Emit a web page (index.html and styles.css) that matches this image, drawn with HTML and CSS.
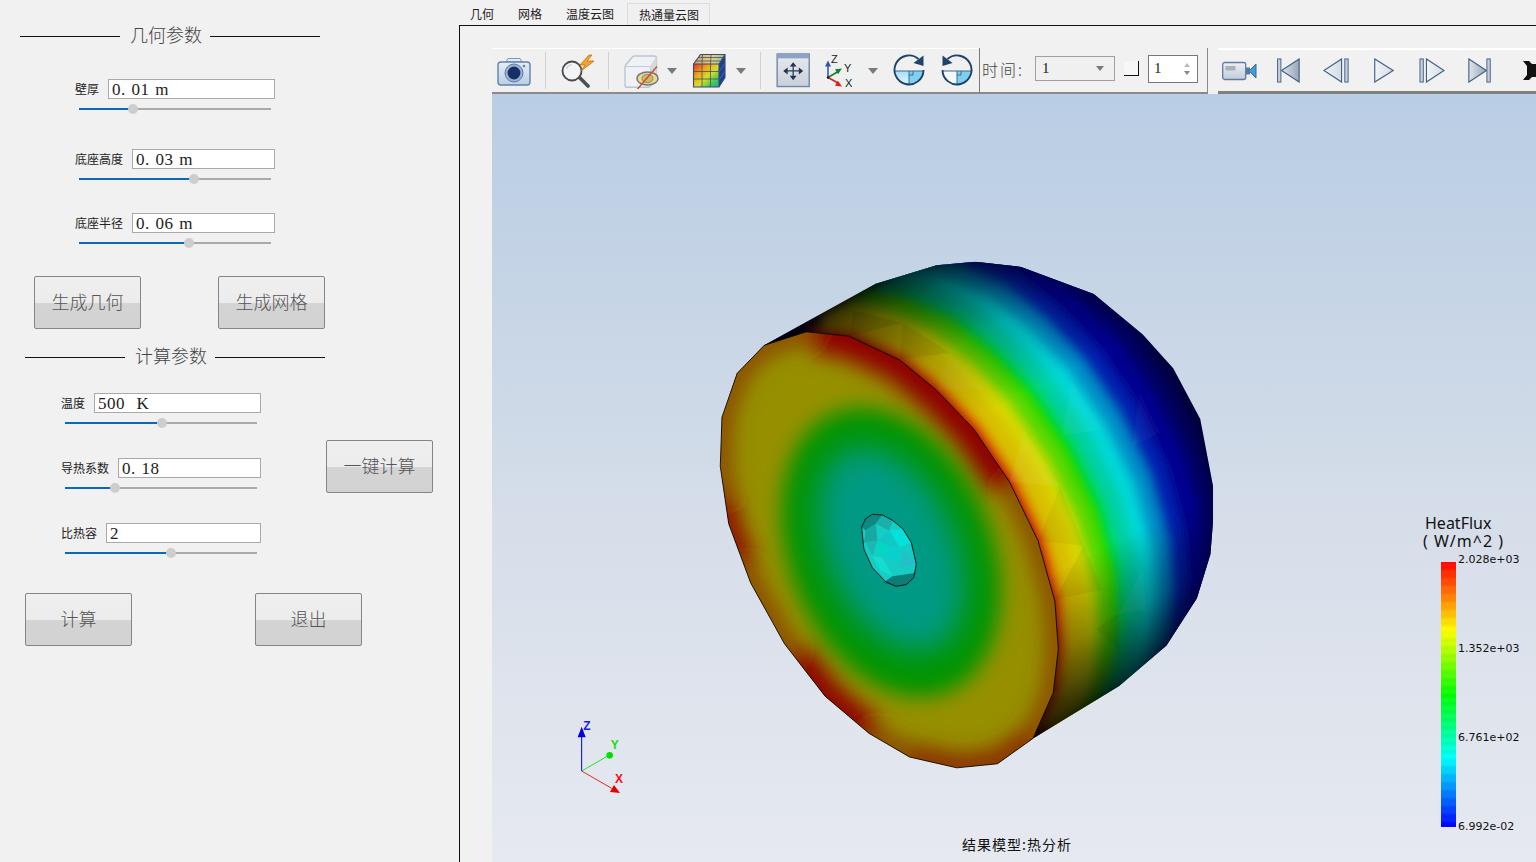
FILE: index.html
```html
<!DOCTYPE html>
<html lang="zh">
<head>
<meta charset="utf-8">
<title>热分析</title>
<link rel="stylesheet" href="styles.css">
</head>
<body>
<div class="app">
  <aside class="side">
    <div class="title"><span class="rule r100"></span><span class="title-text">几何参数</span><span class="rule r110"></span></div>
    <div class="fields geo">
      <div class="block"><div class="row"><label>壁厚</label><input value="0. 01 m"></div><div class="slider"><span class="fill" style="width:54px"></span><span class="thumb"></span><span class="rest"></span></div></div>
      <div class="block b35"><div class="row"><label>底座高度</label><input value="0. 03 m"></div><div class="slider"><span class="fill" style="width:115px"></span><span class="thumb"></span><span class="rest"></span></div></div>
      <div class="block b29"><div class="row"><label>底座半径</label><input value="0. 06 m"></div><div class="slider"><span class="fill" style="width:110px"></span><span class="thumb"></span><span class="rest"></span></div></div>
    </div>
    <div class="btns btns-geo"><button>生成几何</button><button>生成网格</button></div>
    <div class="title title2"><span class="rule r100"></span><span class="title-text">计算参数</span><span class="rule r110"></span></div>
    <div class="calc">
      <div class="fields calc-fields">
        <div class="block"><div class="row"><label>温度</label><input value="500  K"></div><div class="slider"><span class="fill" style="width:97px"></span><span class="thumb"></span><span class="rest"></span></div></div>
        <div class="block b30"><div class="row"><label>导热系数</label><input value="0. 18"></div><div class="slider"><span class="fill" style="width:50px"></span><span class="thumb"></span><span class="rest"></span></div></div>
        <div class="block b30"><div class="row"><label>比热容</label><input value="2"></div><div class="slider"><span class="fill" style="width:106px"></span><span class="thumb"></span><span class="rest"></span></div></div>
      </div>
      <button class="onekey">一键计算</button>
    </div>
    <div class="btns btns-calc"><button>计算</button><button>退出</button></div>
  </aside>

  <main class="main">
    <nav class="tabs"><span class="tab first">几何</span><span class="tab">网格</span><span class="tab">温度云图</span><span class="tab active">热通量云图</span></nav>
    <section class="pane">
      <div class="tools">
        <div class="toolbar">
          <svg class="i34" viewBox="0 0 34 30"><defs><linearGradient id="camBody" x1="0" y1="0" x2="0" y2="1"><stop offset="0" stop-color="#e6edf6"/><stop offset="1" stop-color="#bccfe6"/></linearGradient></defs><path d="M9 6l2-3.500h12l2 3.500z" fill="#e3eaf3" stroke="#7a97b8"/><rect x="1" y="6" width="32" height="23" rx="3" fill="url(#camBody)" stroke="#5f83ab" stroke-width="1.400"/><circle cx="17" cy="17" r="9" fill="#9ab2d0" stroke="#5a7da8"/><circle cx="17" cy="17" r="6.400" fill="#172f66"/><circle cx="27" cy="10" r="1.300" fill="#5f83ab"/></svg>
          <span class="sep"></span>
          <svg class="i35w" viewBox="0 0 35 34"><circle cx="12" cy="17" r="9.500" fill="#f2f4f6" stroke="#4a4a4a" stroke-width="1.800"/><path d="M6.500 15a6 6 0 0 1 5-4.500" stroke="#c4c4c4" fill="none"/><path d="M20 24l8 8" stroke="#4a4f52" stroke-width="3.600" stroke-linecap="round"/><path d="M29 1l-9 10h5l-4 6 13-10h-7l5-6z" fill="#f0a428" stroke="#c8700c" stroke-width=".8"/></svg>
          <span class="sep"></span>
          <div class="drop"><svg class="i36" viewBox="0 0 36 36"><path d="M2 14c0-1 .5-1.800 1-2.500L9 4.500C9.500 3.800 10 3 11.500 3H31c1.500 0 2.500 1 2.500 2.500V25l-6 8c-.5.7-1 1.200-2 1.200H4c-1 0-2-1-2-2z" fill="#eff1f4" stroke="#bcc5d2" stroke-width="1.400"/><path d="M2.500 13.500H26c1 0 1.500.5 1.500 1.500v19M27.500 14l6-9" fill="none" stroke="#c3cbd6" stroke-width="1.200"/><path d="M27.500 14l6-9v20l-6 8z" fill="#d6dae1"/><ellipse cx="24.500" cy="25.500" rx="10.500" ry="6.500" fill="#ecd98c" stroke="#6e7683" stroke-width="1.400"/><ellipse cx="24.500" cy="25.500" rx="5.500" ry="4.200" fill="#cdb96c" stroke="#8b8b70"/><path d="M34 13.500L14.500 36" stroke="#cf4f28" stroke-width="1.500"/></svg><span class="tri"></span></div>
          <div class="drop d10"><svg class="i35" viewBox="-1.500 0 35 35"><defs><linearGradient id="gridTop" x1="0" y1="0" x2="1" y2="0"><stop offset="0" stop-color="#d8a070"/><stop offset=".6" stop-color="#e6d080"/><stop offset="1" stop-color="#88c0a0"/></linearGradient><linearGradient id="gridFace" x1="0" y1="0" x2="1" y2="1"><stop offset="0" stop-color="#e62b1e"/><stop offset=".3" stop-color="#f0a018"/><stop offset=".55" stop-color="#d8dc28"/><stop offset=".8" stop-color="#40c858"/><stop offset="1" stop-color="#1fa8c8"/></linearGradient></defs><path d="M8 1.500h24.500l-6 9.500H1z" fill="url(#gridTop)"/><rect x="1" y="11" width="25.500" height="23" fill="url(#gridFace)"/><path d="M26.500 11l6-9.500v23l-6 9.500z" fill="#1c3e94"/><path d="M26.500 19l6-9M26.500 27l6-9" stroke="#5878c0" stroke-width=".7"/><path d="M9.500 11v23M18 11v23M1 18.500h25.500M1 26h25.500M10 1.500L9.500 11M18.500 1.500L18 11M3 8h25M5.500 4.500h25" stroke="#3f5266" stroke-width=".8"/><path d="M1 11h25.500v23H1zM1 11l7-9.500h24.500v23l-6 9.500M26.500 11l6-9.500" fill="none" stroke="#3c4c68" stroke-width="1.100"/></svg><span class="tri"></span></div>
          <span class="sep"></span>
          <svg class="i35" viewBox="-1 0 35 36"><defs><linearGradient id="fitBg" x1="0" y1="0" x2="0" y2="1"><stop offset="0" stop-color="#e8ebf0"/><stop offset="1" stop-color="#c9ced8"/></linearGradient></defs><rect x=".7" y="1" width="33" height="33.500" fill="url(#fitBg)" stroke="#6b86aa" stroke-width="1.400"/><rect x="1" y="1" width="32.500" height="4.500" fill="#8ca3c3"/><path d="M17.200 12v13M10 18.500h14.500" stroke="#2c3e58" stroke-width="1.300"/><path d="M17.200 9.500l-3.500 4.500h7zM17.200 28l-3.500-4.500h7zM7 18.500l4.500-3.500v7zM27.500 18.500l-4.500-3.500v7z" fill="#1f3350"/></svg>
          <div class="drop d12"><svg class="i32" viewBox="-4 0 32 36"><path d="M0 24.500V10" stroke="#2a55b0" stroke-width="1.500"/><path d="M0 7.500l-3 6h6z" fill="#2a55b0"/><path d="M0 24.500L11 18" stroke="#188038" stroke-width="1.700"/><path d="M14 15.500l-7 .8 3 5z" fill="#188038"/><path d="M0 24.500l11 6" stroke="#d82020" stroke-width="1.700"/><path d="M14 33.500l-7-.8 2.800-5z" fill="#d82020"/><circle cx="0" cy="24.500" r="1.200" fill="#111"/><text x="3" y="10" class="axlet">Z</text><text x="16" y="19" class="axlet">Y</text><text x="17" y="34" class="axlet">X</text></svg><span class="tri"></span></div>
          <svg class="i34r" viewBox="-2 0 34 34"><defs><linearGradient id="rotFill" x1="0" y1="0" x2="0" y2="1"><stop offset="0" stop-color="#a8def4"/><stop offset="1" stop-color="#e6f6fc"/></linearGradient></defs><path d="M1 17h14v14A14 14 0 0 1 1 17z" fill="url(#rotFill)"/><path d="M15 17h14A14 14 0 0 1 15 31z" fill="#7fd0ee"/><path d="M1 17h28M15 17v14M15 21h4v-4" fill="none" stroke="#3c6a92"/><path d="M24.500 5A14.500 14.500 0 1 0 29.500 16" fill="none" stroke="#1d4468" stroke-width="1.900"/><path d="M29.500 1.500v10.500l-10-3z" fill="#1d4468"/></svg>
          <svg class="i34r" viewBox="-2 0 34 34"><path d="M1 17h14v14A14 14 0 0 1 1 17z" fill="#f4f8fb"/><path d="M15 17h14A14 14 0 0 1 15 31z" fill="#7fd0ee"/><path d="M1 17h28M15 17v14M15 21h4v-4" fill="none" stroke="#3c6a92"/><path d="M5.500 5A14.500 14.500 0 1 1 .5 16" fill="none" stroke="#1d4468" stroke-width="1.900"/><path d="M.5 1.500v10.500l10-3z" fill="#1d4468"/></svg>
        </div>
        <div class="timebar">
          <span class="time-label">时间:</span>
          <div class="combo"><span>1</span><span class="tri small"></span></div>
          <span class="check"></span>
          <div class="spin"><span>1</span><span class="arrows"><i class="up"></i><i class="down"></i></span></div>
        </div>
        <div class="player">
          <svg class="p-cam" viewBox="0 0 35 20"><defs><linearGradient id="pc" x1="0" y1="0" x2="0" y2="1"><stop offset="0" stop-color="#eef1f5"/><stop offset="1" stop-color="#c3cbd8"/></linearGradient></defs><rect x=".7" y="1.500" width="23" height="17" rx="2" fill="url(#pc)" stroke="#5d7ba3" stroke-width="1.300"/><rect x="3.500" y="5" width="10" height="4.500" fill="#aab1bb"/><path d="M27 10l7-7v14z" fill="#3f9ed8" stroke="#3f6890"/><path d="M24 6.500h4v7h-4z" fill="#4f7aa8"/></svg>
          <svg class="p" viewBox="0 0 25 27"><defs><linearGradient id="pd" x1="0" y1="0" x2="1" y2="0"><stop offset="0" stop-color="#dfe4ea"/><stop offset="1" stop-color="#98a6b8"/></linearGradient><linearGradient id="pl" x1="0" y1="0" x2="1" y2="0"><stop offset="0" stop-color="#f2f4f7"/><stop offset="1" stop-color="#d4dbe4"/></linearGradient></defs><rect x=".7" y="1" width="3.600" height="25" fill="#c7ced8" stroke="#3f5f88"/><path d="M24 1v25L5 13.500z" fill="url(#pd)" stroke="#3f5f88" stroke-width="1.200"/></svg>
          <svg class="pw" viewBox="0 0 28 27"><path d="M20 1v25L1 13.500z" fill="url(#pl)" stroke="#3f5f88" stroke-width="1.200"/><rect x="23.500" y="1" width="3.600" height="25" fill="#c7ced8" stroke="#3f5f88"/></svg>
          <svg class="p-play" viewBox="0 0 22 27"><path d="M1 1v25l20-12.500z" fill="url(#pl)" stroke="#3f5f88" stroke-width="1.200"/></svg>
          <svg class="pw" viewBox="0 0 28 27"><rect x="1" y="1" width="3.600" height="25" fill="#c7ced8" stroke="#3f5f88"/><path d="M8 1v25l19-12.500z" fill="url(#pl)" stroke="#3f5f88" stroke-width="1.200"/></svg>
          <svg class="p" viewBox="0 0 25 27"><path d="M1 1v25l19-12.500z" fill="url(#pd)" stroke="#3f5f88" stroke-width="1.200"/><rect x="20.500" y="1" width="3.600" height="25" fill="#c7ced8" stroke="#3f5f88"/></svg>
          <svg class="p-x" viewBox="0 0 16 21"><path d="M0 1h6l3 3h7v13H9l-3 3H0l4-5V6z" fill="#111"/></svg>
        </div>
      </div>

      <div class="view">
        <svg class="model" viewBox="0 0 1568 1568">
          <defs>
            <path id="rim" d="M315 242L440 255L590 325L700 415L810 530L915 685L1000 860L1050 1040L1060 1180L1045 1310L985 1445"/>
            <clipPath id="sideClip"><path d="M190 282L320 210L520 100L700 45L815 35L950 50L1165 130L1310 250L1400 350L1480 500L1518 700L1518 800L1510 900L1470 1030L1380 1170L1240 1290L985 1445L600 800z"/></clipPath>
            <clipPath id="faceClip"><path id="facePath" d="M190 282L315 242L440 255L590 325L700 415L810 530L915 685L1000 860L1050 1040L1060 1180L1045 1310L985 1445L880 1520L760 1532L620 1500L500 1430L370 1320L250 1165L150 985L85 810L60 640L65 495L110 365z"/></clipPath>
            <filter id="b12" filterUnits="userSpaceOnUse" x="-100" y="-100" width="1800" height="1800"><feGaussianBlur stdDeviation="15"/></filter>
            <filter id="b30" filterUnits="userSpaceOnUse" x="-100" y="-100" width="1800" height="1800"><feGaussianBlur stdDeviation="32"/></filter>
            <filter id="b45" filterUnits="userSpaceOnUse" x="-100" y="-100" width="1800" height="1800"><feGaussianBlur stdDeviation="45"/></filter>
            <linearGradient id="shade" gradientUnits="userSpaceOnUse" x1="480" y1="60" x2="1160" y2="1400">
              <stop offset="0" stop-color="#000" stop-opacity=".95"/><stop offset=".1" stop-color="#000" stop-opacity=".55"/><stop offset=".22" stop-color="#000" stop-opacity=".2"/><stop offset=".36" stop-color="#000" stop-opacity="0"/><stop offset=".7" stop-color="#000" stop-opacity="0"/><stop offset=".84" stop-color="#000" stop-opacity=".35"/><stop offset="1" stop-color="#000" stop-opacity=".95"/>
            </linearGradient>
          </defs>
          <g clip-path="url(#sideClip)">
            <rect width="1568" height="1568" fill="#00003c"/>
            <g fill="none" filter="url(#b12)" stroke-width="75" stroke-linejoin="round">
              <use href="#rim" transform="translate(440 -271)" stroke="#000060"/>
              <use href="#rim" transform="translate(395 -243)" stroke="#000090"/>
              <use href="#rim" transform="translate(340 -209)" stroke="#0020b0"/>
              <use href="#rim" transform="translate(292 -180)" stroke="#0090c8"/>
              <use href="#rim" transform="translate(248 -153)" stroke="#00d8d8"/>
              <use href="#rim" transform="translate(205 -126)" stroke="#00d0a0"/>
              <use href="#rim" transform="translate(160 -98)" stroke="#00d800"/>
              <use href="#rim" transform="translate(118 -73)" stroke="#60d800"/>
              <use href="#rim" transform="translate(76 -47)" stroke="#d8d800"/>
              <use href="#rim" transform="translate(42 -26)" stroke="#d8c000"/>
              <use href="#rim" transform="translate(4 -2)" stroke="#d81000" stroke-width="40"/>
            </g>
            <path d="M960 535l105 165-150-15z" fill="#fff" opacity=".06"/><path d="M1065 700l70 175-135-15z" fill="#000" opacity=".04"/><path d="M1135 875l55 130-140 30z" fill="#000" opacity=".05"/><path d="M740 305l100 103-140 8z" fill="#fff" opacity=".04"/><path d="M600 215l140 90-150 20z" fill="#000" opacity=".06"/><path d="M455 180l145 35-160 40z" fill="#000" opacity=".08"/><path d="M1240 1075l70-130 10 120z" fill="#fff" opacity=".05"/><path d="M1170 1120l70-45v110z" fill="#000" opacity=".06"/><path d="M1040 1320l110-100 0 100z" fill="#fff" opacity=".05"/><path d="M1300 420l60 120-80 40z" fill="#fff" opacity=".03"/><path d="M1100 390l90 140-120 20z" fill="#fff" opacity=".04"/>
            <rect width="1568" height="1568" fill="url(#shade)"/>
          </g>
          <g clip-path="url(#faceClip)">
            <rect width="1568" height="1568" fill="#969000"/>
            <g fill="none" filter="url(#b30)">
              <use href="#facePath" stroke="#8a4000" stroke-width="60"/>
              <path d="M340 240L440 255L590 325L700 415L810 530L915 685" stroke="#8e0000" stroke-width="130"/>
              <path d="M60 730L90 830L130 930" stroke="#8e0000" stroke-width="70"/>
              <path d="M280 1200L370 1320L500 1430" stroke="#8e0000" stroke-width="100"/>
              <path d="M620 1500L760 1532L880 1520L985 1445" stroke="#8a2c00" stroke-width="80"/>
            </g>
            <ellipse cx="565" cy="895" rx="300" ry="445" transform="rotate(-22 565 895)" fill="#009400" filter="url(#b30)"/>
            <ellipse cx="565" cy="885" rx="190" ry="320" transform="rotate(-24 565 885)" fill="#009a84" filter="url(#b45)"/>
          </g>
          <use href="#facePath" fill="none" stroke="#000" stroke-width="2.500"/>
          <path d="M478 820L490 795L510 782L540 784L570 800L600 825L625 865L640 930L632 970L610 990L580 995L550 982L510 940L485 885z" fill="#16cdc6"/>
          <path d="M478 820L490 795L510 782L540 784L520 810L490 830z" fill="#0d8984"/><path d="M540 784L570 800L560 830L520 810z" fill="#1ab0a8"/><path d="M490 830L520 810L525 860L485 865z" fill="#18a8a0"/><path d="M560 830L600 825L625 865L590 880z" fill="#06e0dc"/><path d="M525 860L565 880L525 905z" fill="#00d8c4"/><path d="M560 830L590 880L565 880L525 860z" fill="#10c8c4"/><path d="M490 865L525 860L510 905z" fill="#1ab8b0"/><path d="M565 880L590 880L590 925L540 910z" fill="#08d0cc"/><path d="M600 890L640 930L590 940z" fill="#22c0c8"/><path d="M510 905L540 910L570 965L535 950z" fill="#14dcd0"/><path d="M540 985L570 965L640 955L632 970L610 990L580 995z" fill="#0d7d78"/>
          <path d="M478 820L490 795L510 782L540 784L570 800L600 825L625 865L640 930L632 970L610 990L580 995L550 982L510 940L485 885z" fill="none" stroke="#000" stroke-width="2.500"/>
        </svg>

        <svg class="triad" viewBox="0 0 240 270">
          <path d="M65 183V75" stroke="#0000e8" stroke-width="3"/><path d="M65 50L53 82h24z" fill="#0000e8"/>
          <path d="M65 183L140 140" stroke="#00e000" stroke-width="2.500"/><circle cx="149" cy="136" r="10" fill="#00e000"/>
          <path d="M65 183L155 235" stroke="#e80000" stroke-width="2.500"/><path d="M180 249L150 246L162 225z" fill="#e80000"/>
          <text x="70" y="61" class="tz">Z</text><text x="152" y="118" class="ty">Y</text><text x="165" y="220" class="tx">X</text>
        </svg>

        <div class="legend">
          <div class="legend-title">HeatFlux</div>
          <div class="legend-unit">( W/m^2 )</div>
          <div class="legend-body">
            <div class="bar"></div>
            <div class="labels"><span>2.028e+03</span><span>1.352e+03</span><span>6.761e+02</span><span>6.992e-02</span></div>
          </div>
        </div>
        <div class="caption">结果模型:热分析</div>
      </div>
    </section>
  </main>
</div>
</body>
</html>
```
FILE: styles.css
```css
* { box-sizing: border-box; }
html, body { margin: 0; height: 100%; overflow: hidden; }
body { background: #f1f1f1; font-family: "Noto Sans CJK SC", "Liberation Sans", sans-serif; color: #222; }
.app { display: flex; width: 1536px; height: 862px; overflow: hidden; }

/* left panel */
.side { width: 459px; flex: none; padding-top: 25px; }
.title { display: flex; align-items: center; height: 22px; margin-left: 20px; gap: 10px; color: #444; font-size: 18px; }
.title2 { margin-left: 25px; margin-top: 17px; }
.title-text { width: 70px; height: 22px; white-space: nowrap; line-height: 19px; font-weight: 300; }
.rule { height: 1px; background: #111; }
.r100 { width: 100px; }
.r110 { width: 110px; }
.fields { width: 200px; }
.geo { margin: 32px 0 0 75px; }
.block { display: block; }
.b35 { margin-top: 35px; }
.b29 { margin-top: 29px; }
.b30 { margin-top: 30px; }
.row { display: flex; align-items: center; gap: 9px; height: 20px; }
label { font-size: 12px; line-height: 20px; white-space: nowrap; color: #222; }
input { flex: 1; min-width: 0; height: 20px; border: 1px solid #a9a9a9; background: #fff; padding: 2px 3px 0; margin: 0; font: 17px/17px "Liberation Serif", serif; letter-spacing: .5px; word-spacing: 1px; color: #222; outline: none; }
.slider { display: flex; align-items: center; width: 192px; height: 11px; margin: 4px 0 0 4px; }
.fill { height: 2px; background: #0a69b8; flex: none; }
.rest { height: 2px; background: #aaa; flex: 1; }
.thumb { width: 10px; height: 10px; border-radius: 50%; background: #cdcdcd; margin: 0 -5px; flex: none; position: relative; }

button { width: 107px; height: 53px; flex: none; padding: 0 0 3px; border: 1px solid #858585; border-radius: 2px; background: linear-gradient(#efefef 0, #ececec 51%, #d4d4d4 52%, #d2d2d2 100%); font: 18px "Noto Sans CJK SC", sans-serif; font-weight: 300; color: #555; }
.btns { display: flex; }
.btns-geo { margin: 28px 0 0 34px; gap: 77px; }
.btns-calc { margin: 35px 0 0 25px; gap: 123px; }
.calc { display: flex; margin-top: 25px; }
.calc-fields { margin-left: 61px; }
.onekey { margin: 47px 0 0 65px; }

/* right side */
.main { flex: 1; min-width: 0; display: flex; flex-direction: column; }
.tabs { display: flex; align-items: flex-end; height: 25px; font-size: 12px; line-height: 22px; color: #222; flex: none; }
.tab { padding: 0 12px; height: 22px; white-space: nowrap; }
.first { padding-left: 11px; }
.active { margin-left: 1px; border: 1px solid #dcdcdc; border-bottom: 0; padding: 0 10px 0 11px; background: #f0f0f0; }
.pane { flex: 1; min-height: 0; border-left: 1px solid #111; border-top: 1px solid #111; padding: 22px 0 0 32px; display: flex; flex-direction: column; }
.tools { display: flex; height: 46px; flex: none; }
.toolbar { display: flex; align-items: center; gap: 14px; width: 487px; padding-left: 5px; background: #f0f0f0; border-top: 1px solid #fff; border-bottom: 2px solid #8a8a8a; }
.sep { width: 1px; height: 37px; background: #d0d0d0; flex: none; }
.drop { display: flex; align-items: center; gap: 8px; }
.d10 { gap: 10px; }
.d12 { gap: 12px; }
.i34 { width: 34px; height: 30px; flex: none; }
.i35w { width: 35px; height: 34px; flex: none; margin-right: -1px; }
.i36 { width: 36px; height: 36px; flex: none; }
.i35 { width: 35px; height: 35px; flex: none; }
.i32 { width: 32px; height: 36px; flex: none; }
.i34r { width: 34px; height: 34px; flex: none; }
.axlet { font: 11px "Liberation Sans", sans-serif; fill: #222; }
.tri { width: 0; height: 0; border-left: 5px solid transparent; border-right: 5px solid transparent; border-top: 6px solid #7a7a7a; flex: none; }
.tri.small { border-left-width: 4px; border-right-width: 4px; border-top-width: 5px; }
.timebar { display: flex; align-items: center; width: 229px; border-left: 1px solid #7a7a7a; border-right: 1px solid #8a8a8a; padding: 0 0 3px 2px; border-bottom: 2px solid #8a8a8a; }
.time-label { width: 53px; font-size: 16px; color: #444; letter-spacing: 2px; white-space: nowrap; font-weight: 300; }
.combo { display: flex; align-items: center; justify-content: space-between; width: 80px; height: 25px; border: 1px solid #a0a0a0; padding: 0 10px 0 6px; font: 15px "Liberation Serif", serif; background: #f0f0f0; }
.check { width: 15px; height: 15px; margin-left: 9px; background: #f7f7f7; border-right: 1px solid #111; border-bottom: 1px solid #111; flex: none; }
.spin { display: flex; align-items: center; justify-content: space-between; width: 50px; height: 28px; margin-left: 9px; border: 1px solid #777; background: #fff; padding: 0 7px 0 5px; font: 15px "Liberation Serif", serif; }
.arrows { display: flex; flex-direction: column; gap: 4px; }
.arrows i { display: block; width: 0; height: 0; border-left: 3px solid transparent; border-right: 3px solid transparent; }
.up { border-bottom: 4px solid #bbb; }
.down { border-top: 4px solid #888; }
.player { flex: 1; min-width: 0; margin-left: 10px; display: flex; align-items: center; gap: 21px; padding-left: 4px; border-top: 2px solid #fff; border-bottom: 3px solid #808080; overflow: hidden; }
.p-cam { width: 35px; height: 20px; flex: none; margin-right: -2px; }
.p { width: 25px; height: 25px; flex: none; }
.pw { width: 28px; height: 25px; flex: none; }
.p-play { width: 22px; height: 25px; flex: none; margin: 0 2px; }
.p-x { width: 16px; height: 21px; flex: none; margin-left: 10px; }

.view { flex: 1; min-height: 0; position: relative; background: linear-gradient(#b9cde4 0, #c8d6e6 30%, #d8dfea 60%, #e6e9f0 100%); overflow: hidden; }
.model { position: absolute; left: 208px; top: 156px; width: 530px; height: 530px; }
.triad { position: absolute; left: 68px; top: 616px; width: 80px; height: 90px; }
.tz, .ty, .tx { font: bold 36px "Liberation Sans", sans-serif; }
.tz { fill: #2020e0; } .ty { fill: #10e010; } .tx { fill: #f01010; }
.legend { position: absolute; left: 931px; top: 420px; font-family: "Noto Sans", sans-serif; color: #111; }
.legend-title { font-size: 16px; line-height: 18px; height: 18px; padding-left: 2px; overflow: visible; }
.legend-unit { font-size: 16px; line-height: 18px; height: 18px; letter-spacing: 1px; white-space: nowrap; }
.legend-body { display: flex; margin: 2px 0 0 18px; }
.bar { width: 15px; height: 265px; margin-top: 10px; background: repeating-linear-gradient(rgba(255,255,255,.03) 0 4px, rgba(0,0,0,.02) 4px 8px), linear-gradient(#ff0000 0, #ffff00 26%, #00ff00 50%, #00ffff 74%, #0000ff 100%); flex: none; }
.labels { display: flex; flex-direction: column; justify-content: space-between; margin-left: 2px; padding-top: 1px; height: 281px; font: 11px/13px "DejaVu Sans", sans-serif; color: #111; white-space: nowrap; }
.caption { position: absolute; left: 470px; bottom: 8px; font-size: 14px; line-height: 20px; letter-spacing: 1px; color: #111; white-space: nowrap; }
```
